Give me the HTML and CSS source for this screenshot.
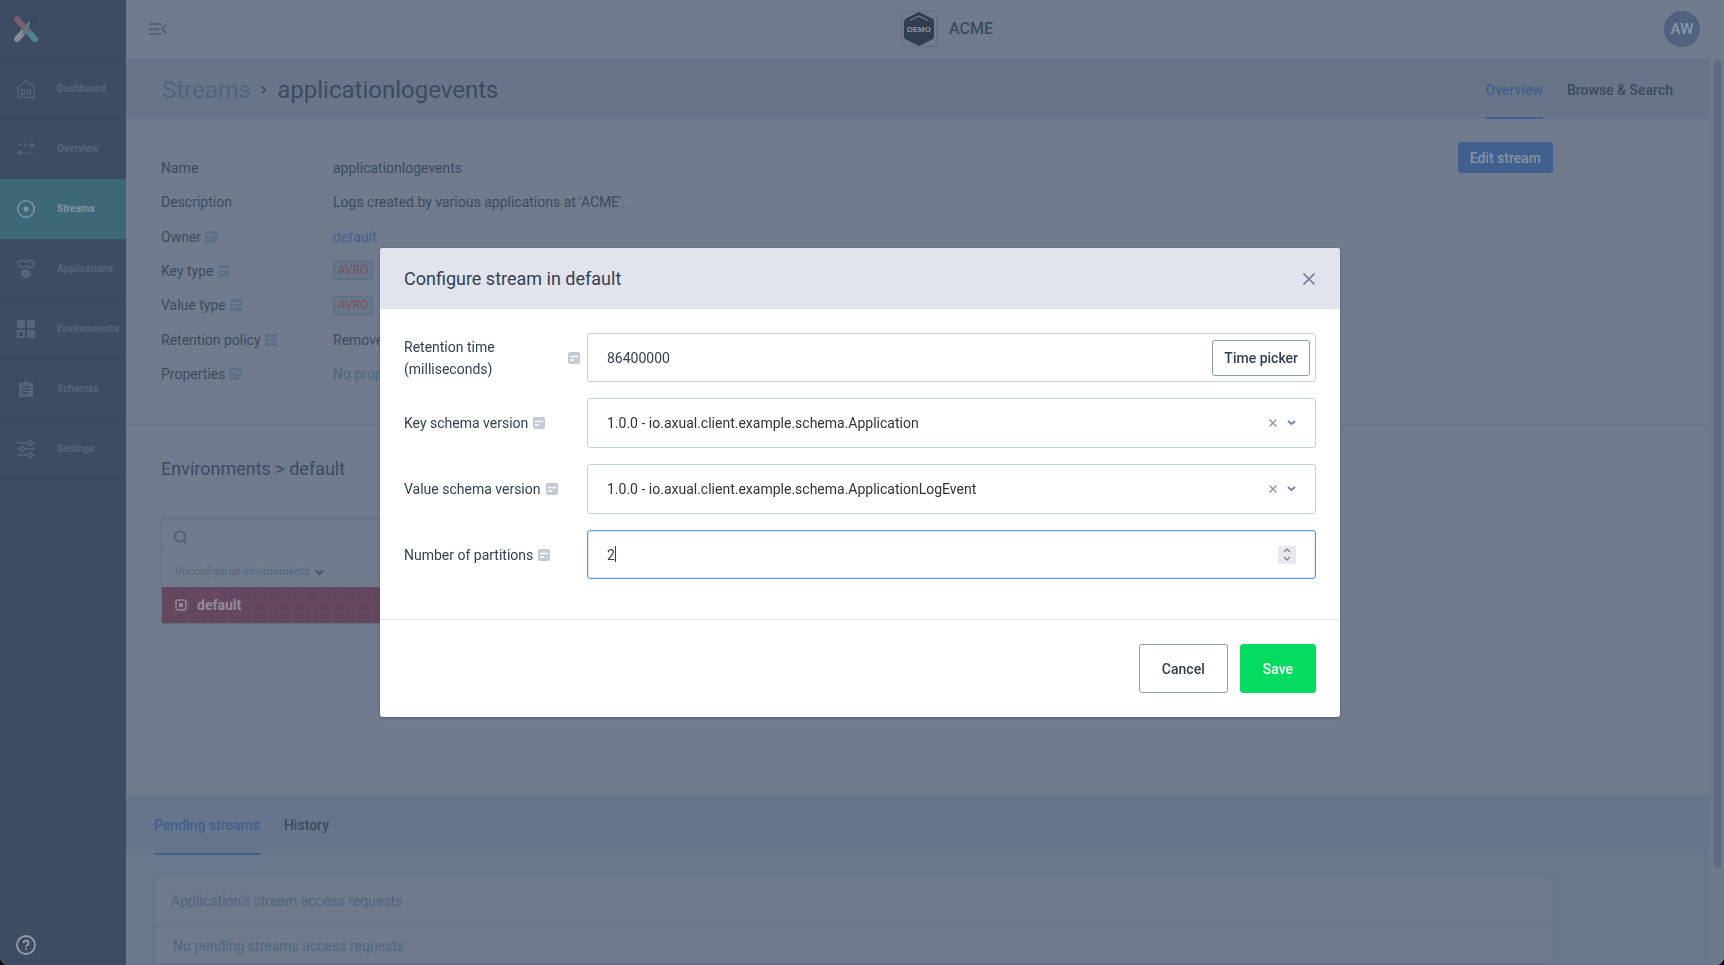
FILE: index.html
```html
<!DOCTYPE html>
<html lang="en">
<head>
  <meta charset="UTF-8">
  <title>Streams - applicationlogevents</title>
  <link rel="stylesheet" href="styles.css">
</head>
<body>

  <svg class="defs" width="0" height="0">
    <symbol id="info" viewBox="0 0 12 12">
      <rect width="12" height="12" rx="2" fill="currentColor"/>
      <path d="M2 4.500h8M2 8h4" fill="none" stroke="var(--line)" stroke-width="1.600"/>
    </symbol>
  </svg>

  <div class="app">
    <aside class="sidebar">
      <a class="logo" href="#" aria-label="Home">
        <svg width="26" height="28" viewBox="0 0 26 28" fill="none" stroke-width="6" stroke-linecap="round">
          <path d="M13 14L22 4" stroke="#374960"/>
          <path d="M4 24L13 14" stroke="#858b91"/>
          <path d="M13 14L22 24" stroke="#4b8594"/>
          <path d="M4 4L13 14.500" stroke="#745e72"/>
          <path d="M16 8L11 18" stroke="#647585" stroke-width="3"/>
        </svg>
      </a>
      <nav>
        <a class="nav-item" href="#">
          <svg width="18" height="20" viewBox="0 0 18 20" fill="none" stroke="currentColor" stroke-width="1.400">
            <path d="M1 18.500V8L9 2l8 6v10.500zM4.500 11h3v4.500h-3zM10.500 15.500V11h3v4.500"/>
          </svg>
          Dashboard
        </a>
        <a class="nav-item" href="#">
          <svg width="18" height="20" viewBox="0 0 18 20" fill="none" stroke="currentColor" stroke-width="1.400">
            <path d="M2 6h12M16 14H5" stroke-dasharray="3 1.500"/>
            <path d="M14 3l4 3-4 3zM4 11l-4 3 4 3z" fill="currentColor" stroke="none"/>
          </svg>
          Overview
        </a>
        <a class="nav-item active" href="#">
          <svg width="18" height="20" viewBox="0 0 18 20" fill="none" stroke="currentColor" stroke-width="1.600">
            <circle cx="9" cy="10" r="8.200"/>
            <circle cx="9" cy="10" r="2.600" fill="currentColor" stroke="none"/>
          </svg>
          Streams
        </a>
        <a class="nav-item" href="#">
          <svg width="18" height="20" viewBox="0 0 18 20" fill="none" stroke="currentColor" stroke-width="1.500" stroke-linejoin="round">
            <path d="M3 1.500h3L9 3l3-1.500h3l2.200 3L15 8.300h-3L9 6.800 6 8.300H3L.8 4.500z"/>
            <path d="M9 10.500l4 2.200v4L9 19l-4-2.300v-4z" fill="currentColor"/>
          </svg>
          Applications
        </a>
        <a class="nav-item" href="#">
          <svg width="18" height="20" viewBox="0 0 18 20" fill="currentColor">
            <path d="M0 1h8v8H0zM10 1h8v8h-8zM10 11h8v8h-8z"/>
            <path d="M1 12h6v6H1z" fill="none" stroke="currentColor" stroke-width="2"/>
          </svg>
          Environments
        </a>
        <a class="nav-item" href="#">
          <svg width="18" height="20" viewBox="0 0 18 20">
            <path d="M3 4h4a2 2 0 0 1 4 0h4a1 1 0 0 1 1 1v12a1 1 0 0 1-1 1H3a1 1 0 0 1-1-1V5a1 1 0 0 1 1-1z" fill="currentColor"/>
            <path d="M5 8h8M5 11h8M5 14h6" stroke="#3d4c63" stroke-width="1.300"/>
          </svg>
          Schemas
        </a>
        <a class="nav-item" href="#">
          <svg width="18" height="20" viewBox="0 0 18 20" fill="none" stroke="currentColor" stroke-width="1.400">
            <path d="M0 4h10.500M15 4h3M0 10h3M7.500 10H18M0 16h10.500M15 16h3"/>
            <circle cx="12.800" cy="4" r="2.200"/><circle cx="5.300" cy="10" r="2.200"/><circle cx="12.800" cy="16" r="2.200"/>
          </svg>
          Settings
        </a>
      </nav>
      <a class="help" href="#" aria-label="Help">
        <svg width="20" height="20" viewBox="0 0 20 20" fill="none" stroke="currentColor" stroke-width="1.800">
          <circle cx="10" cy="10" r="9"/>
          <path d="M7.500 8a2.500 2.500 0 1 1 3.700 2.200c-.8.500-1.200.8-1.200 1.800"/>
          <path d="M10 13.300v1.700"/>
        </svg>
      </a>
    </aside>

    <div class="content">
      <header class="topbar">
        <button class="menu-btn" aria-label="Collapse menu">
          <svg width="18" height="14" viewBox="0 0 18 14" fill="none" stroke="currentColor" stroke-width="1.800">
            <path d="M0 2h13M0 7h10M0 12h13M17.500 2.500L13 7l4.500 4.500"/>
          </svg>
        </button>
        <div class="tenant">
          <span class="tenant-logo">
            <svg width="34" height="34" viewBox="0 0 34 34">
              <path d="M17 0l13 6.500q2 1 2 3v15q0 2-2 3L17 34 4 27.500q-2-1-2-3v-15q0-2 2-3z" fill="#313e51"/>
              <path d="M8 8.500L17 4l9 4.500" fill="none" stroke="#707b8c" stroke-width="1.300"/>
              <text x="17" y="20" text-anchor="middle">DEMO</text>
            </svg>
          </span>
          ACME
        </div>
        <button class="avatar">AW</button>
      </header>

      <div class="page-row">
        <main class="page">
          <div class="title-bar">
            <h1>
              <a href="#">Streams</a>
              <svg width="6" height="8" viewBox="0 0 6 8" fill="none" stroke="currentColor" stroke-width="1.600"><path d="M1 .8L4.500 4 1 7.200"/></svg>
              applicationlogevents
            </h1>
            <nav class="tabs">
              <a class="tab active" href="#">Overview</a>
              <a class="tab" href="#">Browse &amp; Search</a>
            </nav>
          </div>

          <section class="details">
            <dl>
              <dt>Name</dt><dd>applicationlogevents</dd>
              <dt>Description</dt><dd>Logs created by various applications at 'ACME'.</dd>
              <dt>Owner <svg class="info"><use href="#info"/></svg></dt><dd><a href="#">default</a></dd>
              <dt>Key type <svg class="info"><use href="#info"/></svg></dt><dd><span class="tag">AVRO</span></dd>
              <dt>Value type <svg class="info"><use href="#info"/></svg></dt><dd><span class="tag">AVRO</span></dd>
              <dt>Retention policy <svg class="info"><use href="#info"/></svg></dt><dd>Remove</dd>
              <dt>Properties <svg class="info"><use href="#info"/></svg></dt><dd class="muted">No properties</dd>
            </dl>
            <button class="edit-btn">Edit stream</button>
          </section>

          <section class="environments">
            <h2>Environments &gt; default</h2>
            <div class="env-list">
              <label class="env-search">
                <svg width="14" height="14" viewBox="0 0 14 14" fill="none" stroke="currentColor" stroke-width="2"><circle cx="6" cy="6.500" r="5"/><path d="M9 10l3 3"/></svg>
                <input type="text" aria-label="Search environments">
              </label>
              <button class="env-group">
                Unconfigured environments
                <svg width="9" height="7" viewBox="0 0 9 7" fill="none" stroke="currentColor" stroke-width="2"><path d="M1 1.500L4.500 5 8 1.500"/></svg>
              </button>
              <a class="env-item" href="#">
                <svg width="12" height="12" viewBox="0 0 12 12"><rect x="1" y="1" width="10" height="10" rx="2" fill="none" stroke="currentColor" stroke-width="1.400"/><path d="M4 4h4v4H4z" fill="currentColor"/></svg>
                default
              </a>
            </div>
          </section>

          <section class="requests">
            <nav class="tabs">
              <a class="tab active" href="#">Pending streams</a>
              <a class="tab" href="#">History</a>
            </nav>
            <div class="request-box">
              <h3>Application’s stream access requests</h3>
              <p>No pending streams access requests</p>
            </div>
          </section>
        </main>
        <div class="scrollbar"><div class="thumb"></div></div>
      </div>
    </div>
  </div>

  <div class="overlay">
    <form class="modal" role="dialog" aria-labelledby="modalTitle">
      <div class="modal-header">
        <h2 id="modalTitle">Configure stream in default</h2>
        <button type="button" class="close" aria-label="Close">
          <svg width="12" height="12" viewBox="0 0 12 12" fill="none" stroke="currentColor" stroke-width="1.600"><path d="M.5.500l11 11M11.500.500L.5 11.500"/></svg>
        </button>
      </div>

      <div class="modal-body">
        <div class="field">
          <label for="retention"><span>Retention time (milliseconds)</span> <svg class="info"><use href="#info"/></svg></label>
          <div class="control">
            <input type="text" id="retention" value="86400000">
            <button type="button" class="picker-btn">Time picker</button>
          </div>
        </div>
        <div class="field">
          <label for="keySchema"><span>Key schema version</span> <svg class="info"><use href="#info"/></svg></label>
          <div class="control select">
            <select id="keySchema"><option>1.0.0 - io.axual.client.example.schema.Application</option></select>
            <button type="button" class="clear" aria-label="Clear">
              <svg width="8" height="8" viewBox="0 0 8 8" fill="none" stroke="currentColor" stroke-width="1.500"><path d="M.5.500l7 7M7.500.500l-7 7"/></svg>
            </button>
            <svg class="chevron" width="9" height="6" viewBox="0 0 9 6" fill="none" stroke="currentColor" stroke-width="2"><path d="M1 1l3.500 3L8 1"/></svg>
          </div>
        </div>
        <div class="field">
          <label for="valueSchema"><span>Value schema version</span> <svg class="info"><use href="#info"/></svg></label>
          <div class="control select">
            <select id="valueSchema"><option>1.0.0 - io.axual.client.example.schema.ApplicationLogEvent</option></select>
            <button type="button" class="clear" aria-label="Clear">
              <svg width="8" height="8" viewBox="0 0 8 8" fill="none" stroke="currentColor" stroke-width="1.500"><path d="M.5.500l7 7M7.500.500l-7 7"/></svg>
            </button>
            <svg class="chevron" width="9" height="6" viewBox="0 0 9 6" fill="none" stroke="currentColor" stroke-width="2"><path d="M1 1l3.500 3L8 1"/></svg>
          </div>
        </div>
        <div class="field">
          <label for="partitions"><span>Number of partitions</span> <svg class="info"><use href="#info"/></svg></label>
          <div class="control focused">
            <input type="number" id="partitions" value="2" min="1">
            <span class="caret"></span>
            <span class="spinner">
              <button type="button" aria-label="Increase"><svg width="8" height="5" viewBox="0 0 8 5" fill="none" stroke="currentColor" stroke-width="1.500"><path d="M1 4l3-3 3 3"/></svg></button>
              <button type="button" aria-label="Decrease"><svg width="8" height="5" viewBox="0 0 8 5" fill="none" stroke="currentColor" stroke-width="1.500"><path d="M1 1l3 3 3-3"/></svg></button>
            </span>
          </div>
        </div>
      </div>

      <div class="modal-footer">
        <button type="button" class="btn cancel">Cancel</button>
        <button type="submit" class="btn save">Save</button>
      </div>
    </form>
  </div>

</body>
</html>
```
FILE: styles.css
```css
* {
  box-sizing: border-box;
}
html {
  background: #000;
}
body {
  margin: 0;
  font-family: Roboto, "Liberation Sans", sans-serif;
  font-size: 14px;
  line-height: 22px;
  color: #3d4b60;
}
h1, h2, h3, p, dl, dd {
  margin: 0;
  font-weight: 400;
}
a {
  color: #42608f;
  text-decoration: none;
}
button, input, select {
  font: inherit;
  color: inherit;
  background: none;
  border: none;
  padding: 0;
  outline: none;
}
button {
  cursor: pointer;
}
svg {
  display: block;
  flex: none;
}
.defs {
  position: absolute;
}
.app {
  display: flex;
  height: 100vh;
  overflow: hidden;
  background: #707b8d;
  border-radius: 0 0 8px 8px;
}

/* sidebar */
.sidebar {
  display: flex;
  flex-direction: column;
  width: 126px;
  background: #3d4c63;
}
.logo {
  display: flex;
  align-items: center;
  height: 59px;
  padding-left: 13px;
  border-bottom: 1px solid #39485f;
}
.nav-item {
  display: flex;
  align-items: center;
  gap: 22px;
  height: 60px;
  padding-left: 17px;
  border-bottom: 1px solid #39485f;
  color: #55647b;
  font-size: 10px;
  font-weight: 700;
}
.nav-item.active {
  background: #3d6878;
  border-color: #3d6878;
  color: #8293a4;
}
.help {
  margin-top: auto;
  padding: 0 0 10px 16px;
  color: #949cab;
}

/* top bar */
.content {
  display: flex;
  flex-direction: column;
  flex: 1;
  min-width: 0;
}
.topbar {
  display: flex;
  justify-content: space-between;
  align-items: center;
  height: 59px;
  padding: 0 24px 1px 0;
  flex: none;
}
.menu-btn {
  width: 104px;
  padding-left: 23px;
  color: #566478;
}
.tenant {
  display: flex;
  align-items: center;
  gap: 12px;
  font-size: 16px;
  font-weight: 500;
}
.tenant-logo {
  border: 1px solid #607085;
  border-radius: 2px;
}
.tenant-logo text {
  fill: #8b94a1;
  font: bold 8px "Liberation Sans", sans-serif;
}
.avatar {
  width: 36px;
  height: 36px;
  border-radius: 50%;
  background: #4f637e;
  color: #8c98a9;
  font-size: 15px;
  font-weight: 500;
}

/* page */
.page-row {
  display: flex;
  flex: 1;
  min-height: 0;
}
.page {
  display: flex;
  flex-direction: column;
  flex: 1;
  overflow: hidden;
}
.scrollbar {
  width: 15px;
  padding: 1px 3px 0 4px;
  border-left: 1px solid #6b778a;
  background: #6e798c;
}
.thumb {
  height: 808px;
  max-height: 100%;
  border-radius: 4px;
  background: #5f6b80;
}
.title-bar {
  display: flex;
  justify-content: space-between;
  height: 60px;
  flex: none;
  padding: 0 36px;
  background: #687588;
  border-top: 1px solid #627084;
}
.title-bar h1 {
  display: flex;
  align-items: center;
  gap: 10px;
  font-size: 24px;
}
.title-bar h1 a {
  color: #50647f;
}
.tabs {
  display: flex;
  gap: 24px;
}
.tab {
  display: flex;
  align-items: center;
  padding-top: 2px;
  border-bottom: 2px solid transparent;
  color: #3b495e;
  font-weight: 500;
}
.tab.active {
  border-color: #42608f;
  color: #42608f;
}
.details {
  display: flex;
  justify-content: space-between;
  align-items: flex-start;
  height: 306px;
  flex: none;
  padding: 23px 156px 0 35px;
  border-bottom: 1px solid #637286;
}
.details dl {
  display: grid;
  grid-template-columns: 172px auto;
  grid-auto-rows: 1fr;
  align-items: center;
  height: 249px;
  padding-top: 9px;
}
.details dt {
  display: flex;
  align-items: center;
  gap: 4px;
}
.info {
  --line: #727f92;
  width: 12px;
  height: 12px;
  color: #5f7088;
}
.muted {
  color: #52667f;
}
.tag {
  display: block;
  width: 40px;
  height: 19px;
  border: 1px solid #5b6d82;
  border-radius: 3px;
  background: #687689;
  color: #79505f;
  font-size: 12px;
  line-height: 17px;
  text-align: center;
}
.edit-btn {
  height: 31px;
  padding: 0 12px;
  border-radius: 3px;
  background: #42608f;
  color: #8792a6;
  font-weight: 500;
}
.environments {
  flex: 1;
  padding: 33px 35px 0;
}
.environments h2 {
  font-size: 18px;
}
.env-list {
  width: 320px;
  margin-top: 38px;
  border: 1px solid #5f6d82;
  border-radius: 3px;
}
.env-search {
  display: flex;
  align-items: center;
  gap: 8px;
  height: 33px;
  margin-left: 4px;
  padding: 4px 8px 0;
  border-bottom: 1px solid #697689;
  color: #4e637d;
}
.env-group {
  display: flex;
  align-items: center;
  gap: 5px;
  height: 35px;
  padding: 5px 13px 0;
  color: #57667a;
  font-size: 11px;
}
.env-group svg {
  color: #43536a;
}
.env-item {
  display: flex;
  align-items: center;
  gap: 10px;
  height: 36px;
  padding-left: 13px;
  background: repeating-linear-gradient(90deg, #664c64 0 1px, transparent 1px 13px), repeating-linear-gradient(#664c64 0 1px, transparent 1px 13px), #62475f;
  color: #958b9d;
  font-weight: 700;
}
.requests {
  height: 170px;
  flex: none;
  background: #6a788b;
}
.requests .tabs {
  height: 60px;
  padding-left: 28px;
  background: #66758c;
}
.request-box {
  margin: 20px 156px 0 28px;
  border: 1px solid #617186;
  border-radius: 4px;
  background: #6f7a8d;
  color: #51667f;
}
.request-box h3 {
  padding: 14px 16px;
  border-bottom: 1px solid #697689;
  font-size: 14px;
}
.request-box p {
  padding: 8px 18px 6px;
}

/* modal */
.overlay {
  position: fixed;
  inset: 0;
  display: flex;
  align-items: center;
  justify-content: center;
  padding-right: 4px;
}
.modal {
  width: 960px;
  max-width: 100%;
  border-radius: 3px;
  background: #fff;
  color: #333f50;
  overflow: hidden;
  box-shadow: 0 1px 3px rgba(40, 52, 72, .4);
}
.modal-header {
  display: flex;
  justify-content: space-between;
  align-items: center;
  height: 61px;
  padding: 0 24px;
  background: #e1e4ec;
}
.modal-header h2 {
  font-size: 18px;
}
.close {
  padding: 0 1px;
  color: #6a7f9d;
}
.modal-body {
  display: flex;
  flex-direction: column;
  gap: 16px;
  padding: 24px 24px 40px;
}
.field {
  display: flex;
  align-items: center;
  gap: 7px;
}
.field label {
  display: flex;
  align-items: center;
  gap: 5px;
  width: 176px;
}
.field .info {
  --line: #fff;
  color: #c5cbd6;
}
.control {
  position: relative;
  display: flex;
  align-items: center;
  flex: 1;
  height: 49px;
  padding: 0 5px 0 19px;
  border: 1px solid #c8cfda;
  border-radius: 3px;
}
.control input,
.control select {
  flex: 1;
  min-width: 0;
  height: 100%;
  appearance: none;
}
.control.select {
  height: 50px;
  padding-right: 19px;
  color: #333;
}
.control.focused {
  padding-right: 19px;
  border-color: #5f93ec;
  box-shadow: inset 0 0 0 1px #dce8fd;
}
.control input[type="number"] {
  appearance: textfield;
}
.clear {
  margin-right: 10px;
  color: #999;
}
.chevron {
  color: #7187a8;
}
.caret {
  position: absolute;
  left: 27px;
  top: 15px;
  width: 1px;
  height: 16px;
  background: #333f50;
}
.spinner {
  display: flex;
  flex-direction: column;
  justify-content: center;
  align-items: center;
  gap: 3px;
  width: 18px;
  height: 18px;
  background: #e8e8ee;
  color: #8c8c94;
}
.picker-btn {
  height: 36px;
  padding: 0 11px;
  border: 1px solid #8d9cb5;
  border-radius: 3px;
  font-weight: 500;
}
.modal-footer {
  display: flex;
  justify-content: flex-end;
  gap: 12px;
  padding: 24px;
  border-top: 1px solid #e3e8ef;
}
.btn {
  height: 49px;
  padding: 0 22px;
  border: 1px solid #8d9cb5;
  border-radius: 3px;
  font-weight: 500;
}
.btn.save {
  border-color: #04dc61;
  background: #04dc61;
  color: #fff;
}
```
